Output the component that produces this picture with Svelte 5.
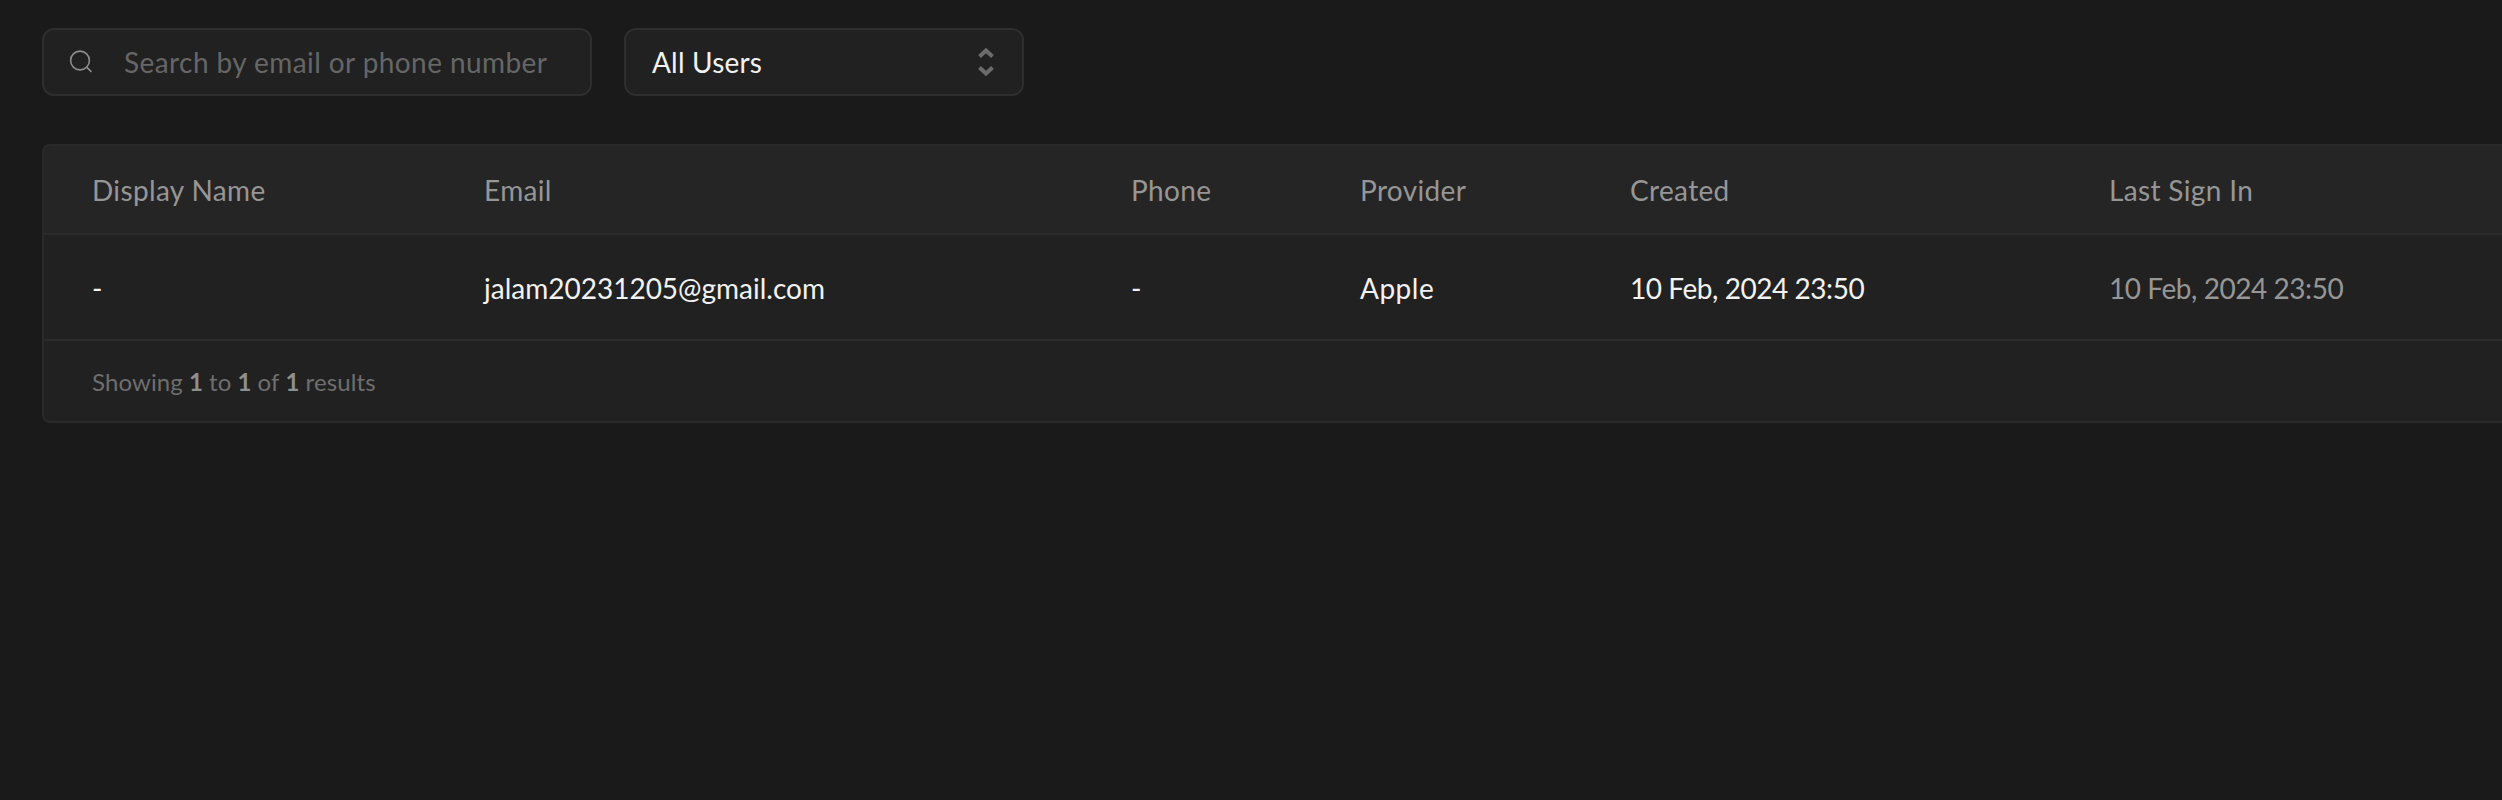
<script>
  const columns = [
    { key: 'name', label: 'Display Name', width: 392 },
    { key: 'email', label: 'Email', width: 647 },
    { key: 'phone', label: 'Phone', width: 229 },
    { key: 'provider', label: 'Provider', width: 270 },
    { key: 'created', label: 'Created', width: 479 },
    { key: 'lastSignIn', label: 'Last Sign In', width: 520 }
  ];

  const users = [
    {
      name: '-',
      email: 'jalam20231205@gmail.com',
      phone: '-',
      provider: 'Apple',
      created: '10 Feb, 2024 23:50',
      lastSignIn: '10 Feb, 2024 23:50'
    }
  ];
</script>

<div class="page">
  <div class="toolbar">
    <label class="search">
      <svg width="32" height="32" viewBox="0 0 32 32" fill="none" stroke="#8c8c8c" stroke-width="1.6">
        <circle cx="14" cy="14.500" r="9.400" />
        <path d="M20.900 21.400l4 4" stroke-linecap="round" />
      </svg>
      <input type="text" placeholder="Search by email or phone number" />
    </label>
    <div class="select">
      <span>All Users</span>
      <svg width="16" height="28" viewBox="0 0 16 28" fill="none" stroke="#6b6b6b" stroke-width="4">
        <path d="M1.500 8.500L8 2.500l6.500 6" />
        <path d="M1.500 19.500L8 25.500l6.500-6" />
      </svg>
    </div>
  </div>

  <div class="card">
    <table>
      <colgroup>
        {#each columns as col}
          <col style="width: {col.width}px" />
        {/each}
      </colgroup>
      <thead>
        <tr>
          {#each columns as col}
            <th>{col.label}</th>
          {/each}
        </tr>
      </thead>
      <tbody>
        {#each users as user}
          <tr>
            {#each columns as col}
              <td
                class:muted={col.key === 'lastSignIn'}
                class:date={col.key === 'created' || col.key === 'lastSignIn'}
                class:provider={col.key === 'provider'}
              >{user[col.key]}</td>
            {/each}
          </tr>
        {/each}
      </tbody>
    </table>
    <div class="footer">
      Showing <b>1</b> to <b>1</b> of <b>1</b> results
    </div>
  </div>
</div>

<style>
  :global(body) {
    background: #1a1a1a;
    overflow: hidden;
  }

  .page {
    box-sizing: border-box;
    height: 800px;
    padding: 28px 0 0 42px;
    font-family: Lato, "Liberation Sans", sans-serif;
    font-size: 28px;
    color: #f2f2f2;
    overflow: hidden;
  }

  .toolbar {
    display: flex;
    gap: 32px;
  }

  .search,
  .select {
    box-sizing: border-box;
    display: flex;
    align-items: center;
    height: 68px;
    background: #212121;
    border: 2px solid #2e2e2e;
    border-radius: 12px;
  }

  .search {
    width: 550px;
    padding-left: 22px;
  }

  .search input {
    flex: 1;
    min-width: 0;
    margin-left: 26px;
    padding: 0;
    background: none;
    border: none;
    outline: none;
    color: #f2f2f2;
    font: inherit;
    letter-spacing: 0.42px;
  }

  .search input::placeholder {
    color: #666;
    opacity: 1;
  }

  .select {
    justify-content: space-between;
    width: 400px;
    padding: 0 28px 0 26px;
    letter-spacing: 0.2px;
  }

  .card {
    width: 2560px;
    margin-top: 48px;
    background: #212121;
    border: 2px solid #2a2a2a;
    border-radius: 8px;
    overflow: hidden;
  }

  table {
    width: 2537px;
    border-collapse: collapse;
    table-layout: fixed;
  }

  th,
  td {
    padding: 0 0 0 48px;
    text-align: left;
    white-space: nowrap;
  }

  th {
    height: 87px;
    background: #252525;
    border-bottom: 2px solid #2b2b2b;
    color: #969696;
    font-weight: 400;
    letter-spacing: 0.35px;
  }

  td {
    height: 102px;
    padding-top: 2px;
    border-bottom: 2px solid #2b2b2b;
    color: #f2f2f2;
  }

  td.muted {
    color: #969696;
  }

  td.date {
    letter-spacing: -0.45px;
  }

  td.provider {
    letter-spacing: 0.5px;
  }

  .footer {
    display: flex;
    align-items: center;
    gap: 0.25em;
    height: 80px;
    padding-left: 48px;
    color: #6e6e6e;
    font-size: 24px;
    letter-spacing: 0.12px;
  }

  .footer b {
    color: #8f8f8f;
    font-weight: 700;
  }
</style>
